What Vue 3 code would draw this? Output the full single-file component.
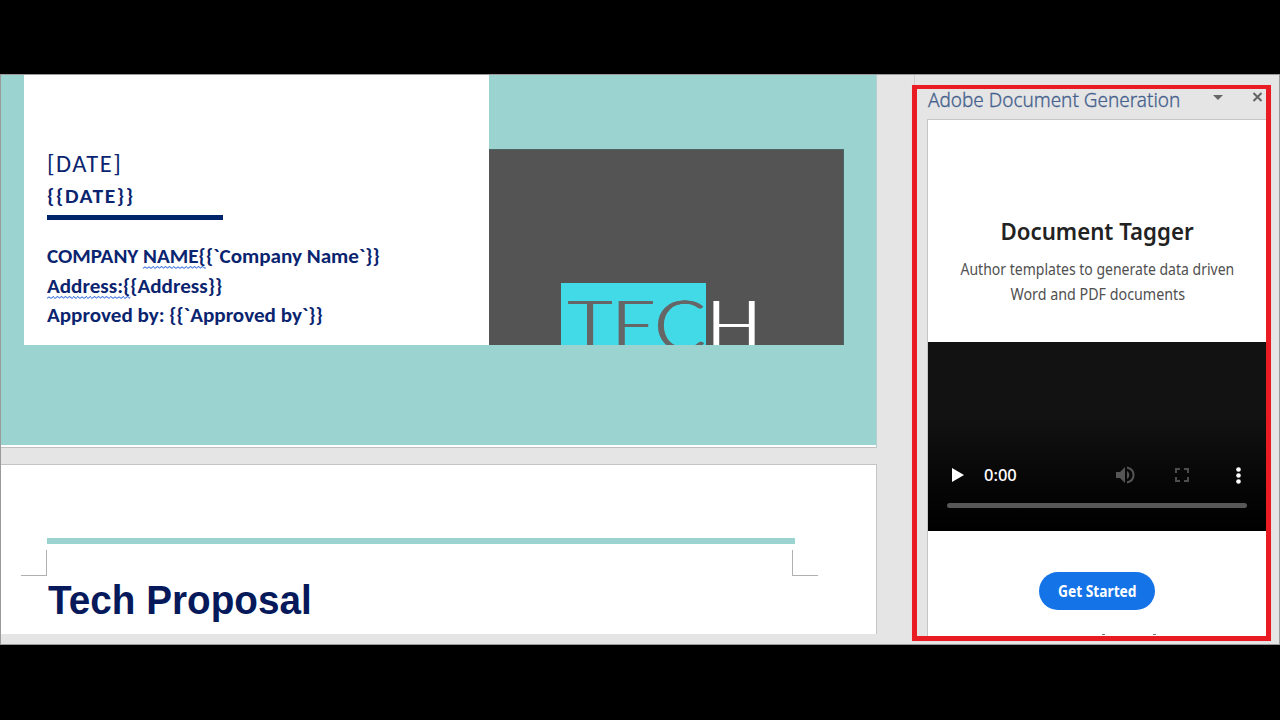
<script setup>
// Squeezes or stretches a line of text horizontally to a given width.
const vFit = {
  mounted(el, { value }) {
    el.style.transform = `scaleX(${value / el.offsetWidth})`
  },
}
</script>

<template>
  <main class="stage">
    <div class="window">
      <section class="document">
        <article class="page cover">
          <div class="card">
            <div class="line date"><span v-fit="75">[DATE]</span></div>
            <div class="line tag"><span v-fit="88" v-text="'{{DATE}}'"></span></div>
            <div class="rule"></div>
            <div class="line info"><span v-fit="333">COMPANY <i class="wavy">NAME<b v-text="'{'"></b></i><b v-text="'{`Company Name`}}'"></b></span></div>
            <div class="line info"><span v-fit="175"><i class="wavy">Address:<b v-text="'{'"></b></i><b v-text="'{Address}}'"></b></span></div>
            <div class="line info"><span v-fit="276" v-text="'Approved by: {{`Approved by`}}'"></span></div>
          </div>
          <div class="dark">
            <div class="picked"><span v-fit="138">TEC</span></div>
            <div class="rest"><span v-fit="54">H</span></div>
          </div>
        </article>
        <article class="page second">
          <div class="bar"></div>
          <div class="marks"><i class="mark left"></i><i class="mark right"></i></div>
          <h1><span v-fit="264">Tech Proposal</span></h1>
        </article>
      </section>
      <aside class="side">
        <div class="tick"></div>
        <div class="panel">
          <header>
            <span v-fit="253" class="title">Adobe Document Generation</span>
            <svg class="caret" width="10" height="5" viewBox="0 0 10 5"><path d="M0 0h10L5 5z" fill="#666" /></svg>
            <svg class="close" width="11" height="10" viewBox="0 0 11 10"><path d="M1.500 1l8 8M9.500 1l-8 8" stroke="#636363" stroke-width="2" fill="none" /></svg>
          </header>
          <div class="body">
            <h2><span v-fit="193">Document Tagger</span></h2>
            <p><span v-fit="274">Author templates to generate data driven</span></p>
            <p><span v-fit="175">Word and PDF documents</span></p>
            <div class="video">
              <div class="controls">
                <svg class="play" width="12" height="14" viewBox="0 0 12 14"><path d="M0 0l12 7-12 7z" fill="#fff" /></svg>
                <span v-fit="33" class="time">0:00</span>
                <svg class="volume" width="19" height="18" viewBox="0 0 19 18">
                  <path d="M0 6h4l5-5v16l-5-5H0z" fill="#555" />
                  <path d="M11 5c3 1.500 3 6.500 0 8z" fill="#555" />
                  <path d="M11 1.500c8.700 2 8.700 13 0 15" stroke="#555" stroke-width="2" fill="none" />
                </svg>
                <svg class="full" width="14" height="14" viewBox="0 0 14 14"><path d="M1 5V1h4M9 1h4v4M13 9v4H9M5 13H1V9" stroke="#4d4d4d" stroke-width="2" fill="none" /></svg>
                <svg class="more" width="5" height="17" viewBox="0 0 5 17"><g fill="#fff"><circle cx="2.500" cy="2.500" r="2.300" /><circle cx="2.500" cy="8.500" r="2.300" /><circle cx="2.500" cy="14.500" r="2.300" /></g></svg>
              </div>
              <div class="track"></div>
            </div>
            <button><span v-fit="79">Get Started</span></button>
            <div class="tips"><i></i><i></i></div>
          </div>
        </div>
      </aside>
    </div>
  </main>
</template>

<style>
body { margin: 0; background: #000; }
</style>

<style scoped>
* { box-sizing: border-box; }
.stage { height: 720px; padding-top: 74px; background: #000; overflow: hidden; }
.window {
  display: flex; height: 571px; overflow: hidden; background: #e5e5e5;
  border: 1px solid #9a9a9a;
}
.line span, .picked span, .rest span, h1 span, .title, .time { display: inline-block; transform-origin: left; white-space: pre; }
h2 span, p span, button span { display: inline-block; white-space: nowrap; transform-origin: center; }

.document { width: 911px; }
.page { width: 876px; border-right: 1px solid #c4c4c4; }
.cover {
  display: flex; height: 373px; padding-left: 23px; background: #9ad3cf;
  border-bottom: 1px solid #c0c0c0; box-shadow: inset 0 -2px #fff; border-right-color: #b4d0cd;
}
.card {
  width: 465px; height: 270px; padding: 71px 0 0 23px; background: #fff;
  font-family: Carlito, Lato, sans-serif; color: #0a246f;
}
.line { white-space: nowrap; }
.date { height: 35px; line-height: 36px; font-size: 23.500px; letter-spacing: 1.500px; }
.tag { height: 30px; line-height: 30px; font-size: 20.500px; font-weight: 700; letter-spacing: 1.500px; }
.rule { width: 176px; height: 5px; margin: 4px 0 22px; background: #00246b; }
.info { height: 29.500px; line-height: 29.500px; font-size: 20.500px; font-weight: 700; }
.info i { font-style: normal; }
.info b { font-weight: 700; }
.wavy {
  background: url("data:image/svg+xml,%3Csvg xmlns='http://www.w3.org/2000/svg' width='4' height='3'%3E%3Cpath d='M0 2.500L2 .5L4 2.500' fill='none' stroke='%233f74e0' stroke-width='.9'/%3E%3C/svg%3E") repeat-x left bottom;
}
.dark {
  display: flex; width: 355px; height: 196px; margin-top: 74px; padding: 133px 0 0 72px;
  background: #545454; border: 1px solid #4c6564; border-width: 1px 1px 0 0; overflow: hidden;
  font: 300 69px/82px Lato, sans-serif;
}
.picked { width: 145px; height: 62px; padding-left: 6px; background: #43dae7; color: #666; text-shadow: 1px 0 #666, 2px 0 #666; }
.rest { height: 62px; color: #fff; text-shadow: 1px 0 #fff, 2px 0 #fff; }

.second {
  height: 170px; margin-top: 16px; padding: 73px 0 0 46px; background: #fff; border-top: 1px solid #c4c4c4;
}
.bar { width: 748px; height: 6px; background: #9ad3cf; }
.marks { display: flex; justify-content: space-between; width: 797px; margin: 6px 0 0 -26px; }
.mark { width: 26px; height: 26px; border: 0 solid #b0b0b0; border-bottom-width: 1px; }
.mark.left { border-right-width: 1px; }
.mark.right { border-left-width: 1px; }
h1 { margin: 0; padding-left: 1px; font: 700 40px/49px "Liberation Sans", Arial, sans-serif; color: #06195a; }

.side { width: 359px; }
.tick { width: 1px; height: 10px; margin-left: 2px; background: #cdcdcd; }
.panel { width: 359px; height: 556px; border: 5px solid #e91c24; border-top-width: 4px; padding-left: 10px; box-shadow: 0 0 1px #f3c9cb; overflow: hidden; }
header { display: flex; height: 30px; }
.title { width: max-content; padding-left: 1px; font: 300 20px/22px "Noto Sans", sans-serif; color: #44608c; -webkit-text-stroke: .3px #44608c; }
.caret { position: absolute; left: 1213px; top: 95px; }
.close { position: absolute; left: 1252px; top: 92px; }
.body {
  width: 340px; height: 517px; background: #fff; border: 1px solid #c6c6c6; border-right: 0;
  border-bottom: 0; text-align: center; font-family: "Noto Sans", sans-serif;
}
h2 { margin: 0; padding-top: 94px; font-size: 23.500px; line-height: 34px; font-weight: 600; color: #222; }
p { margin: 0; height: 24.500px; font-size: 15.500px; line-height: 24px; color: #505050; }
h2 + p { margin-top: 9px; }
.video {
  height: 189px; margin-top: 36px; padding: 122px 20px 0 19px;
  background: linear-gradient(#121212 0 40%, #060606 75%, #000);
}
.controls { display: flex; align-items: center; height: 22px; }
.play { margin-left: 5px; }
.time { margin-left: 20px; font: 500 16px/22px "Noto Sans", sans-serif; color: #fff; }
.volume { margin-left: auto; }
.full { margin-left: 40px; }
.more { margin: 0 6px 0 47px; }
.track { height: 5px; margin-top: 17px; border-radius: 3px; background: #575757; }
button {
  display: block; width: 116px; height: 38px; margin: 41px 0 0 111px; padding: 0; border: 0;
  border-radius: 19px; background: #1473e6; color: #fff; font: 700 15.500px/37px "Noto Sans", sans-serif;
}
.tips { display: flex; gap: 48px; margin: 24px 0 0 174px; }
.tips i { width: 3px; height: 1px; background: #777; }
</style>
